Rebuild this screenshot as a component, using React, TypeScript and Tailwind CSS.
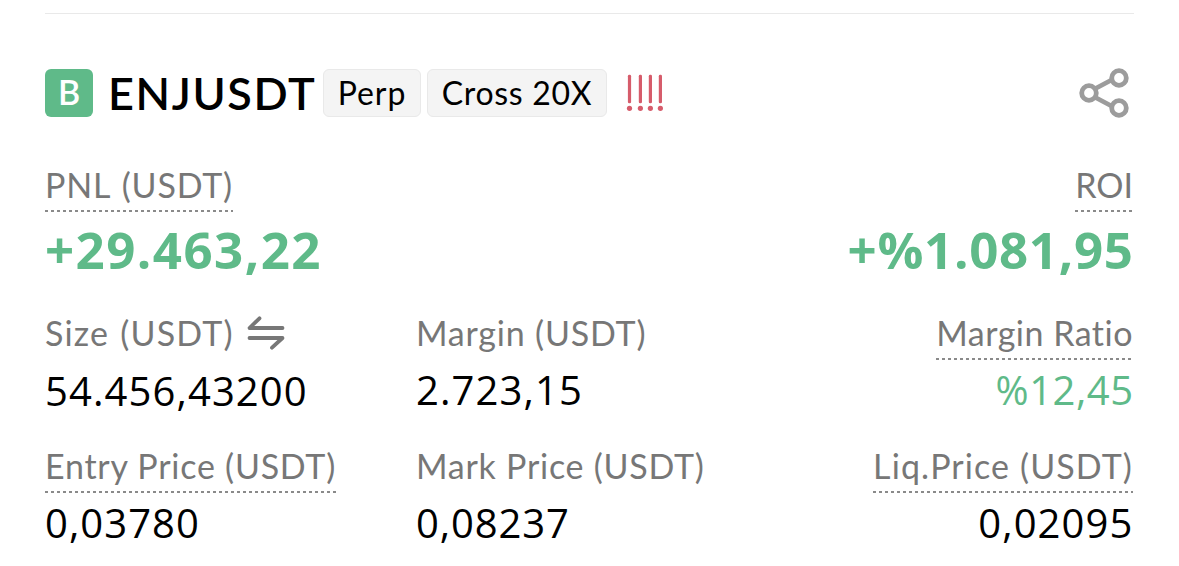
import type { ReactNode } from "react";
import clsx from "clsx";

const DottedLine = () => (
  <div className="h-[2px] w-full bg-[repeating-linear-gradient(90deg,#8a8a8a_0px,#8a8a8a_3px,transparent_3px,transparent_6px)]" />
);

interface StatProps {
  label: string;
  value: string;
  labelClass?: string;
  valueClass?: string;
  underline?: boolean;
  right?: boolean;
  icon?: ReactNode;
}

const Stat = ({
  label,
  value,
  labelClass,
  valueClass,
  underline,
  right,
  icon,
}: StatProps) => (
  <div className={clsx("flex flex-col", right ? "items-end" : "items-start")}>
    <div className="h-12">
      <div className="flex h-[46px] items-start whitespace-pre">
        <span
          className={clsx(
            "pt-px font-[Lato,sans-serif] text-[34px] leading-[40px] text-[#777777]",
            labelClass
          )}
        >
          {label}
        </span>
        {icon}
      </div>
      {underline && <DottedLine />}
    </div>
    <div
      className={clsx(
        "font-['Open_Sans',sans-serif] whitespace-pre",
        valueClass
      )}
    >
      {value}
    </div>
  </div>
);

const SwapIcon = () => (
  <svg
    width="38"
    height="34"
    viewBox="0 0 38 34"
    fill="none"
    stroke="#777777"
    strokeWidth="3.8"
    strokeLinecap="round"
    strokeLinejoin="round"
    className="mt-1 ml-[13px] shrink-0"
  >
    <path d="M35.5 12H2.5L12.5 2.3" />
    <path d="M2.5 22H35.5L25 31.7" />
  </svg>
);

const ShareIcon = () => (
  <svg
    width="52"
    height="52"
    viewBox="0 0 52 52"
    fill="none"
    stroke="#9c9c9c"
    strokeWidth="4.8"
  >
    <path d="M17.5 21.5L33.5 13M17.5 30.5L33.5 39" />
    <circle cx="11" cy="26" r="7.3" />
    <circle cx="41" cy="11" r="7.3" />
    <circle cx="41" cy="41" r="7.3" />
  </svg>
);

const RiskIcon = () => (
  <svg width="38" height="38" viewBox="0 0 38 38">
    {[3.5, 14.4, 24.4, 34.4].map((x) => (
      <g key={x} fill="#d65c6b">
        <rect x={x - 1.6} y="0.8" width="3.2" height="28.5" rx="1.4" />
        <circle cx={x} cy="34.3" r="2.6" />
      </g>
    ))}
  </svg>
);

const valueText = "text-[40px] leading-[48px]";
const pnlText = "mt-[7px] text-[51px] leading-[60px] font-bold text-[#5fba89]";

export default function App() {
  return (
    <div className="h-[566px] w-[1179px] overflow-hidden bg-white px-[45px] pt-[13px]">
      <div className="h-px w-[1089px] bg-[#e9e9e9]" />

      <header className="mt-[55px] flex h-12 items-center font-[Lato,sans-serif]">
        <div className="flex size-12 shrink-0 items-center justify-center rounded-md bg-[#5fba89] pb-[3px] text-[34px] font-semibold text-white">
          B
        </div>
        <h1 className="ml-[15px] w-[215px] text-[45px] leading-[48px] font-semibold tracking-[1.6px] whitespace-nowrap text-black">
          ENJUSDT
        </h1>
        <div className="flex h-12 w-[98px] shrink-0 items-center justify-center rounded-md border border-[#e9e9e9] bg-[#f4f4f4] text-[32px] tracking-[0.9px]">
          Perp
        </div>
        <div className="ml-1.5 flex h-12 w-[180px] shrink-0 items-center justify-center rounded-md border border-[#e9e9e9] bg-[#f4f4f4] text-[32px] tracking-[0.7px] whitespace-nowrap">
          Cross 20X
        </div>
        <div className="ml-[19px]">
          <RiskIcon />
        </div>
        <div className="mr-1 ml-auto">
          <ShareIcon />
        </div>
      </header>

      <section className="mt-[47px] flex w-[1088px] justify-between">
        <Stat
          label="PNL (USDT)"
          value="+29.463,22"
          underline
          labelClass="tracking-[0.8px] [word-spacing:2px]"
          valueClass={clsx(pnlText, "tracking-[1.45px]")}
        />
        <Stat
          label="ROI"
          value="+%1.081,95"
          underline
          right
          valueClass={clsx(pnlText, "-mr-[0.7px] tracking-[0.7px]")}
        />
      </section>

      <section className="mt-[33px] grid w-[1088px] grid-cols-[371px_1fr_auto]">
        <Stat
          label="Size (USDT)"
          value="54.456,43200"
          icon={<SwapIcon />}
          labelClass="tracking-[1.2px] [word-spacing:1px]"
          valueClass={clsx(valueText, "mt-[7px] tracking-[1.1px]")}
        />
        <Stat
          label="Margin (USDT)"
          value="2.723,15"
          labelClass="tracking-[0.8px]"
          valueClass={clsx(valueText, "mt-1.5 tracking-[1.1px]")}
        />
        <Stat
          label="Margin Ratio"
          value="%12,45"
          underline
          right
          labelClass="tracking-[0.5px]"
          valueClass={clsx(
            valueText,
            "mt-1.5 -mr-[0.5px] tracking-[0.5px] text-[#5fba89]"
          )}
        />
      </section>

      <section className="mt-[30px] grid w-[1088px] grid-cols-[371px_1fr_auto]">
        <Stat
          label="Entry Price (USDT)"
          value="0,03780"
          underline
          labelClass="tracking-[0.75px]"
          valueClass={clsx(valueText, "mt-1.5 tracking-[1.05px]")}
        />
        <Stat
          label="Mark Price (USDT)"
          value="0,08237"
          labelClass="tracking-[0.75px]"
          valueClass={clsx(valueText, "mt-1.5 tracking-[0.9px]")}
        />
        <Stat
          label="Liq.Price (USDT)"
          value="0,02095"
          underline
          right
          labelClass="tracking-[1.1px]"
          valueClass={clsx(valueText, "mt-1.5 -mr-[0.5px] tracking-[1.1px]")}
        />
      </section>
    </div>
  );
}
